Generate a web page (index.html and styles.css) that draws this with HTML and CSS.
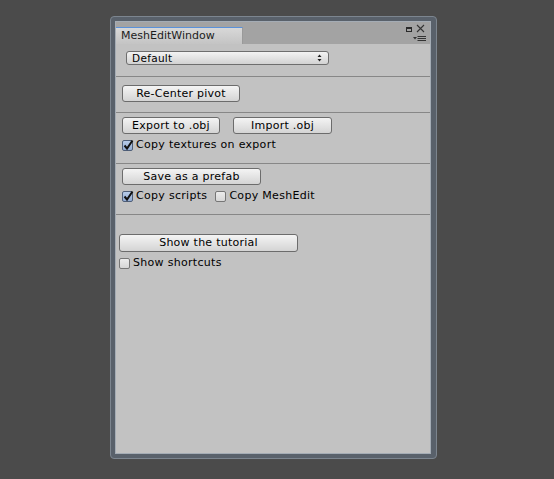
FILE: index.html
```html
<!DOCTYPE html>
<html lang="en">
<head>
    <meta charset="UTF-8">
    <title>MeshEditWindow</title>
    <link rel="stylesheet" href="styles.css">
</head>
<body>
    <div class="window">
        <div class="panel">
            <div class="tabbar">
                <div class="tab">MeshEditWindow</div>
                <svg class="win-icons" width="26" height="22" viewBox="0 0 26 22">
                    <rect x="2.5" y="5.5" width="5" height="4" fill="none" stroke="#2a2a2a" stroke-width="1"/>
                    <rect x="2" y="5" width="6" height="2" fill="#2a2a2a"/>
                    <path d="M13 3 L20 10 M20 3 L13 10" stroke="#333" stroke-width="1.1"/>
                    <path d="M9 15 L13 15 L11 17.5 Z" fill="#333"/>
                    <path d="M13.5 14.5 H22 M13.5 16.5 H22 M13.5 18.5 H22" stroke="#333" stroke-width="1"/>
                </svg>
            </div>

            <div class="content">
                <div class="popup">
                    <span>Default</span>
                    <svg width="5" height="8" viewBox="0 0 5 8">
                        <path d="M0.5 3 L2.5 0.5 L4.5 3 Z M0.5 5 L2.5 7.5 L4.5 5 Z" fill="#222"/>
                    </svg>
                </div>

                <div class="sep sep-first"></div>

                <button class="btn btn-recenter">Re-Center pivot</button>

                <div class="sep sep-second"></div>

                <div class="row">
                    <button class="btn btn-export">Export to .obj</button>
                    <button class="btn btn-import">Import .obj</button>
                </div>
                <div class="checks checks-export">
                    <label class="check"><span class="box on"><svg width="13" height="13" viewBox="0 0 13 13"><path d="M2.5 6.5 L5 9.5 L10.5 1.5" fill="none" stroke="#111" stroke-width="2"/></svg></span>Copy textures on export</label>
                </div>

                <div class="sep sep-third"></div>

                <button class="btn btn-prefab">Save as a prefab</button>
                <div class="checks checks-prefab">
                    <label class="check"><span class="box on"><svg width="13" height="13" viewBox="0 0 13 13"><path d="M2.5 6.5 L5 9.5 L10.5 1.5" fill="none" stroke="#111" stroke-width="2"/></svg></span>Copy scripts</label>
                    <label class="check"><span class="box"></span>Copy MeshEdit</label>
                </div>

                <div class="sep sep-fourth"></div>

                <button class="btn btn-tutorial">Show the tutorial</button>
                <div class="checks checks-tutorial">
                    <label class="check"><span class="box"></span>Show shortcuts</label>
                </div>
            </div>
        </div>
    </div>
</body>
</html>
```

FILE: styles.css
```css
html, body { margin: 0; padding: 0; }
body {
    background: #4b4b4b;
    width: 554px;
    height: 479px;
    overflow: hidden;
    font-family: "DejaVu Sans", Verdana, sans-serif;
    font-size: 11px;
    color: #000;
}

.window {
    box-sizing: border-box;
    margin: 16px 0 0 110px;
    width: 327px;
    height: 443px;
    background: #59616b;
    border: 1px solid #7c858f;
    border-radius: 4px;
    padding: 4px 5px 4px 4px;
}
.panel {
    box-sizing: border-box;
    height: 100%;
    border: 1px solid #a4acb5;
    background: #c2c2c2;
    display: flex;
    flex-direction: column;
}

.tabbar {
    height: 22px;
    background: #a3a3a3;
    display: flex;
    align-items: flex-end;
}
.tab {
    box-sizing: border-box;
    width: 127px;
    height: 17px;
    padding: 1px 0 0 5px;
    border-top: 1px solid #5b92da;
    border-right: 1px solid #9a9a9a;
    background: linear-gradient(#d8d8d8, #c4c4c4);
    color: #1c1c1c;
    line-height: 14px;
}
.win-icons { margin-left: auto; align-self: flex-start; }

.content { flex: 1; display: flex; flex-direction: column; align-items: flex-start; }

.popup {
    box-sizing: border-box;
    margin: 7px 0 0 10px;
    width: 203px;
    height: 14px;
    padding: 0 6px 0 5px;
    border: 1px solid #6e6e6e;
    border-radius: 3px;
    background: linear-gradient(#f3f3f3, #d2d2d2);
    display: flex;
    align-items: center;
    justify-content: space-between;
    font-size: 10.5px;
    letter-spacing: 0.3px;
    line-height: 12px;
}

.sep { align-self: stretch; height: 1px; background: #878787; }
.sep-first { margin-top: 11px; }
.sep-second { margin-top: 10px; }
.sep-third { margin-top: 10px; }
.sep-fourth { margin-top: 10px; }

.btn {
    box-sizing: border-box;
    height: 17px;
    padding: 0;
    margin: 0;
    border: 1px solid #6c6c6c;
    border-radius: 3px;
    background: linear-gradient(#f4f4f4, #d4d4d4);
    font: inherit;
    letter-spacing: 0.25px;
    color: #000;
    line-height: 14px;
    text-align: center;
}
.btn-recenter { margin: 8px 0 0 6px; width: 118px; }
.row { display: flex; margin: 4px 0 0 6px; gap: 13px; }
.btn-export { width: 98px; }
.btn-import { width: 99px; }
.btn-prefab { margin: 4px 0 0 6px; width: 139px; }
.btn-tutorial { margin: 19px 0 0 3px; width: 179px; height: 18px; }

.checks { display: flex; gap: 8px; height: 16px; }
.checks-export { margin: 3px 0 0 6px; }
.checks-prefab { margin: 3px 0 0 6px; }
.checks-tutorial { margin: 3px 0 0 3px; }

.check {
    display: flex;
    align-items: center;
    letter-spacing: 0.3px;
    line-height: 16px;
}
.box {
    box-sizing: border-box;
    position: relative;
    width: 11px;
    height: 11px;
    margin-right: 3px;
    border: 1px solid #767676;
    border-radius: 2px;
    background: linear-gradient(#ececec, #d6d6d6);
}
.box.on { background: linear-gradient(#b7cbe8, #93acd4); border-color: #4e5e78; }
.box svg { position: absolute; left: -1px; top: -2px; }
```
